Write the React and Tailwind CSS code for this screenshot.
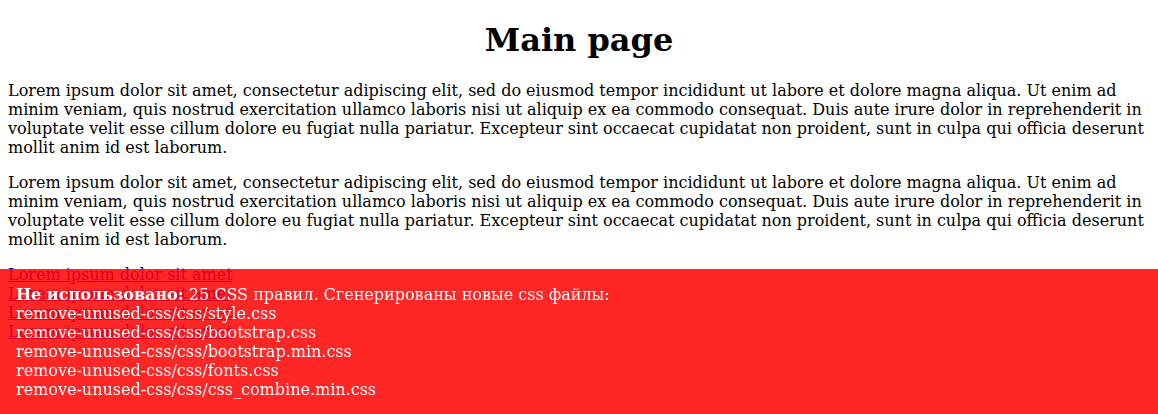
import React from 'react';

const LOREM =
  'Lorem ipsum dolor sit amet, consectetur adipiscing elit, sed do eiusmod tempor incididunt ut labore et dolore magna aliqua. Ut enim ad minim veniam, quis nostrud exercitation ullamco laboris nisi ut aliquip ex ea commodo consequat. Duis aute irure dolor in reprehenderit in voluptate velit esse cillum dolore eu fugiat nulla pariatur. Excepteur sint occaecat cupidatat non proident, sunt in culpa qui officia deserunt mollit anim id est laborum.';

const FILES = [
  'remove-unused-css/css/style.css',
  'remove-unused-css/css/bootstrap.css',
  'remove-unused-css/css/bootstrap.min.css',
  'remove-unused-css/css/fonts.css',
  'remove-unused-css/css/css_combine.min.css'
];

export default function App() {
  return (
    <div className="min-h-screen bg-white px-2 pb-2 pt-px font-['DejaVu_Serif',serif] text-base leading-[19px] text-black">
      <h1 className="mt-[20.44px] mb-[21.44px] text-center text-[32px] font-bold leading-[38px]">Main page</h1>
      <p className="my-4">{LOREM}</p>
      <p className="my-4">{LOREM}</p>
      <div>
        {[0, 1, 2, 3].map((i) => (
          <div key={i}>
            <a href="#" className="text-[#0000ee] underline">Lorem ipsum dolor sit amet</a>
          </div>
        ))}
      </div>

      {/* unused css notice */}
      <div className="fixed bottom-0 left-0 right-0 h-[145px] bg-[rgba(255,0,0,0.85)] px-4 pt-4 text-white">
        <b>Не использовано:</b> 25 CSS правил. Сгенерированы новые css файлы:
        {FILES.map((f) => (
          <div key={f}>{f}</div>
        ))}
      </div>
    </div>
  );
}
